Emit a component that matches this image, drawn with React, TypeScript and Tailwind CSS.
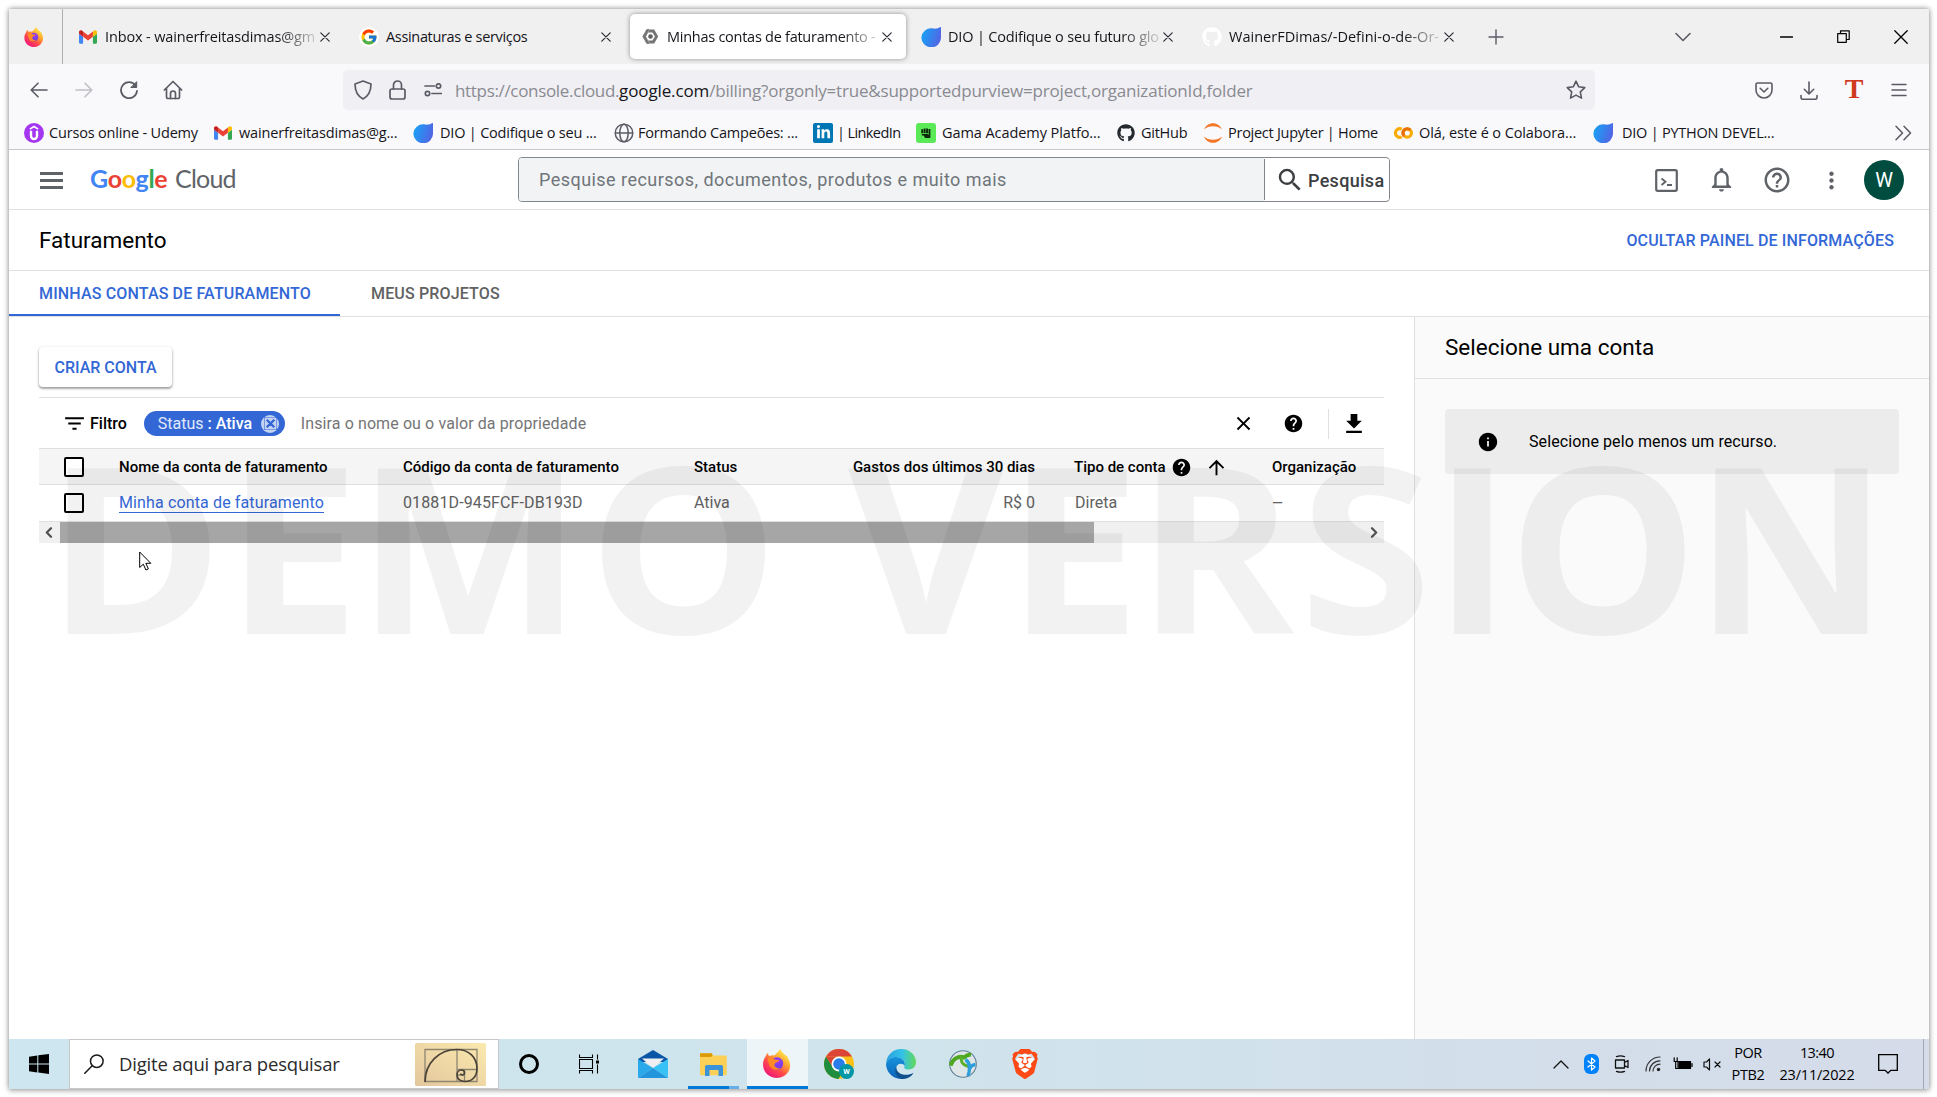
import type { ReactNode } from "react";
import { FcGoogle } from "react-icons/fc";
import { FaGithub, FaLinkedinIn } from "react-icons/fa";
import {
  MdArrowUpward,
  MdClose,
  MdHelp,
  MdHelpOutline,
  MdInfo,
  MdNotificationsNone,
  MdMoreVert,
  MdSearch,
  MdFilterList,
} from "react-icons/md";
import { SiBrave } from "react-icons/si";

/* ---------- logos ---------- */

function Firefox({ id, className }: { id: string; className: string }) {
  return (
    <svg viewBox="0 0 28 29" className={className}>
      <defs>
        <linearGradient id={`${id}-body`} x1="0.85" y1="0.05" x2="0.2" y2="0.95">
          <stop offset="0" stopColor="#fff44f" />
          <stop offset="0.35" stopColor="#ffa930" />
          <stop offset="0.65" stopColor="#ff4a4a" />
          <stop offset="1" stopColor="#f0147f" />
        </linearGradient>
        <radialGradient id={`${id}-globe`} cx="0.6" cy="0.3" r="0.8">
          <stop offset="0" stopColor="#a03df0" />
          <stop offset="1" stopColor="#5a3ee0" />
        </radialGradient>
      </defs>
      <path
        d="M2.6 7.6C3 6 4 4.6 5 4c0 1.300.4 2.300 1 3 2-.6 4-.8 5.500-.5C13 5 14.500 3.500 17.500 0c.8 2 1.500 3.500 3.500 5 2.500 1.500 3.800 3 4.200 4.500 2.700 5 2.500 9.500.3 13A13.600 13.600 0 0 1 14 29C6.500 29 0 23.300 0 15.500c0-3 1-5.600 2.600-7.900z"
        fill={`url(#${id}-body)`}
      />
      <circle cx="14" cy="14.500" r="6.200" fill={`url(#${id}-globe)`} />
      <path
        d="M5 9.500c3.200-1 5.500-.4 7.300 1.300 1.500.2 2.700.2 4 .2-.3 1.700-2.300 2-3.800 2.700-.3.700-.3 1.300-1.300 2 .5 2.800 3.500 4 6.300 3.200-3.500 3.100-9.500 2-11-2.400C5.600 14 4.800 12 5 9.500z"
        fill="#ff8a25"
      />
    </svg>
  );
}

function Gmail() {
  return (
    <svg viewBox="52 42 88 66" className="h-[14px] w-[18px]">
      <path fill="#4285f4" d="M58 108h14V74L52 59v43c0 3.320 2.690 6 6 6" />
      <path fill="#34a853" d="M120 108h14c3.320 0 6-2.690 6-6V59l-20 15" />
      <path fill="#fbbc04" d="M120 48v26l20-15v-8c0-7.420-8.470-11.650-14.400-7.200" />
      <path fill="#ea4335" d="M72 74V48l24 18 24-18v26L96 92" />
      <path fill="#c5221f" d="M52 51v8l20 15V48l-5.600-4.200c-5.940-4.450-14.400-.22-14.400 7.200" />
    </svg>
  );
}

function Dio({ id }: { id: string }) {
  return (
    <svg viewBox="0 0 20 20" className="size-5">
      <defs>
        <linearGradient id={id} x1="0" y1="0.3" x2="1" y2="0.6">
          <stop offset="0" stopColor="#17a2f5" />
          <stop offset="1" stopColor="#5463e4" />
        </linearGradient>
      </defs>
      <path d="M20 0v10.500a9.800 9.500 0 1 1-9-9.200c1.500.3 3 .5 4.500.2C17.500 1.200 18.500.3 20 0z" fill={`url(#${id})`} />
    </svg>
  );
}

function Udemy() {
  return (
    <svg viewBox="0 0 20 20" className="size-5">
      <circle cx="10" cy="10" r="10" fill="#a435f0" />
      <path d="M5.800 6.200 10 3.500l4.200 2.700" stroke="#fff" strokeWidth="1.600" fill="none" />
      <path d="M7 7.800v5.300a3 3 0 0 0 6 0V7.800" stroke="#fff" strokeWidth="2.400" fill="none" />
    </svg>
  );
}

function CloudHex() {
  return (
    <svg viewBox="0 0 17 17" className="size-[17px]">
      <path d="M4.800 1.500h2.400L3.600 8.500l3.600 7H4.800L.8 8.500z" fill="#757575" stroke="#757575" strokeWidth=".8" />
      <path d="M12.200 1.500H7.800L6 4.500h4.400l2.600 4-2.600 4H6l1.800 3h4.400l4-7z" fill="#757575" />
      <circle cx="8.500" cy="8.500" r="2.300" fill="#616161" />
    </svg>
  );
}

function Globe() {
  return (
    <svg viewBox="0 0 20 20" className="size-5" fill="none" stroke="#5b5b66" strokeWidth="1.500">
      <circle cx="10" cy="10" r="8.800" />
      <ellipse cx="10" cy="10" rx="4.200" ry="8.800" />
      <path d="M1.200 10h17.600" />
    </svg>
  );
}

function LinkedIn() {
  return (
    <span className="flex size-5 items-center justify-center rounded-[2px] bg-[#0077b5]">
      <FaLinkedinIn className="size-[15px] text-white" />
    </span>
  );
}

function Gama() {
  return (
    <svg viewBox="0 0 20 20" className="size-5">
      <rect width="20" height="20" rx="3" fill="#5bea57" />
      <path
        d="M5.300 6.300h1.900v4H5.300zM7.700 5.400h1.900v4.900H7.700zM10.100 5.400H12v4.900h-1.900zM12.500 6h1.900v6.500h-1.900zM5.800 10.900h6.200v1.600l-1 2.200h3.400v-2.200H5.800z"
        fill="#0b2a0a"
      />
      <path d="M7.500 12h6.500v3H9z" fill="#0b2a0a" />
    </svg>
  );
}

function Jupyter() {
  return (
    <svg viewBox="0 0 20 20" className="size-5" fill="#f37726">
      <path d="M1 6.500C2.600 2.500 6 .2 10 .2s7.400 2.300 9 6.300C16.500 4.200 13.500 3.200 10 3.200S3.500 4.200 1 6.500z" />
      <path d="M1 13.500c1.600 4 5 6.300 9 6.300s7.400-2.300 9-6.300c-2.500 2.300-5.500 3.300-9 3.300s-6.500-1-9-3.300z" />
    </svg>
  );
}

function Colab() {
  return (
    <svg viewBox="0 0 20 14" className="h-[14px] w-5" fill="none" strokeWidth="3.200">
      <path d="M8.700 3.200A4.300 4.300 0 1 0 8.700 10.800" stroke="#f9ab00" />
      <circle cx="14.200" cy="7" r="4.200" stroke="#f9ab00" />
      <path d="M11.200 10A4.200 4.200 0 0 1 17.200 4" stroke="#e8710a" />
    </svg>
  );
}

/* ---------- browser toolbar glyphs ---------- */

function Line({
  d,
  w = 20,
  h = 20,
  sw = 1.6,
  color = "#5b5b66",
  children,
}: {
  d?: string;
  w?: number;
  h?: number;
  sw?: number;
  color?: string;
  children?: ReactNode;
}) {
  return (
    <svg
      width={w}
      height={h}
      viewBox={`0 0 ${w} ${h}`}
      fill="none"
      stroke={color}
      strokeWidth={sw}
      strokeLinecap="round"
      strokeLinejoin="round"
      className="shrink-0"
    >
      {d && <path d={d} />}
      {children}
    </svg>
  );
}

function Cell({ className, children }: { className: string; children: ReactNode }) {
  return <div className={`flex shrink-0 items-center justify-center ${className}`}>{children}</div>;
}

/* ---------- tab strip ---------- */

function Tab({
  icon,
  title,
  track,
  active = false,
  fade = true,
}: {
  icon: ReactNode;
  title: string;
  track: string;
  active?: boolean;
  fade?: boolean;
}) {
  return (
    <div
      className={`mr-[5px] flex h-[45px] w-[276px] shrink-0 items-center rounded-[5px] ${
        active ? "bg-white shadow-[0_0_5px_rgba(0,0,0,0.4)]" : ""
      }`}
    >
      <Cell className="ml-[9px] w-[22px]">{icon}</Cell>
      <div
        className={`ml-[6px] w-[211px] overflow-hidden whitespace-pre pt-px text-[14.5px] leading-6 text-[#15141a] ${track} ${
          fade ? "[mask-image:linear-gradient(to_right,black_82%,transparent_103%)]" : ""
        }`}
      >
        {title}
      </div>
      <Cell className="w-[17px]">
        <Line w={10} h={10} sw={1.2} color="#2b2a33" d="M.8.8l8.400 8.400M9.200.8L.8 9.200" />
      </Cell>
    </div>
  );
}

function TabStrip() {
  return (
    <div className="flex h-[55px] items-center bg-[#f0f0f0]">
      <Cell className="h-full w-[54px] border-r border-[#b0b0b0] pr-[4px]">
        <Firefox id="ff-tab" className="h-[20px] w-[20px]" />
      </Cell>
      <div className="flex w-[1409px] pl-[5px]">
        <Tab icon={<Gmail />} title="Inbox - wainerfreitasdimas@gm" track="tracking-[-0.14px]" />
        <Tab
          icon={
            <span className="flex size-5 items-center justify-center rounded-full bg-white">
              <FcGoogle className="size-[18px]" />
            </span>
          }
          title="Assinaturas e serviços"
          track="tracking-[-0.33px]"
          fade={false}
        />
        <Tab icon={<CloudHex />} title="Minhas contas de faturamento -" track="tracking-[-0.26px]" active />
        <Tab icon={<Dio id="dio-tab" />} title="DIO | Codifique o seu futuro glo" track="tracking-[-0.18px]" />
        <Tab
          icon={<FaGithub className="size-5 text-white" />}
          title="WainerFDimas/-Defini-o-de-Or-"
          track="tracking-[0.02px]"
        />
      </div>
      <Cell className="w-[47px]">
        <Line w={16} h={16} sw={1.4} d="M8 1v14M1 8h14" />
      </Cell>
      <div className="flex flex-1 items-center justify-end">
        <Cell className="mr-[65px] w-5">
          <Line w={16} h={10} sw={1.6} d="M1 1.500l7 7 7-7" />
        </Cell>
        <Cell className="w-[57px]">
          <Line w={13} h={2} sw={1.3} color="#000" d="M.5 1h12" />
        </Cell>
        <Cell className="w-[57px]">
          <Line w={13} h={13} sw={1.2} color="#000" d="M.7 3.700h8.600v8.600H.7zM3.500 3.500V.8h8.700v8.700H9.500" />
        </Cell>
        <Cell className="w-[57px]">
          <Line w={14} h={14} sw={1.3} color="#000" d="M.8.8l12.400 12.400M13.200.8L.8 13.200" />
        </Cell>
      </div>
    </div>
  );
}

function NavBar() {
  return (
    <div className="flex h-[52px] items-center bg-[#f9f9fb]">
      <Cell className="ml-[8px] w-[44px]">
        <Line w={18} h={16} d="M17 8H1.500M8 1.200L1.200 8 8 14.800" />
      </Cell>
      <Cell className="w-[45px]">
        <Line w={18} h={16} color="#bfbfc6" d="M1 8h15.500M10 1.200L16.800 8 10 14.800" />
      </Cell>
      <Cell className="w-[45px]">
        <Line w={18} h={18} sw={1.800}>
          <path d="M15.500 4.500A8 8 0 1 0 17 10" />
          <path d="M16.700 1v5.500h-5.500z" fill="#5b5b66" strokeWidth={1} />
        </Line>
      </Cell>
      <Cell className="w-[44px]">
        <Line w={20} h={20} sw={1.700}>
          <path d="M1.300 10L10 1.500 18.700 10M3.500 8.500v8.300c0 1 .7 1.700 1.700 1.700h9.600c1 0 1.700-.7 1.700-1.700V8.500" />
          <path d="M7.500 18.500v-5a2.500 2.500 0 0 1 5 0v5" />
        </Line>
      </Cell>
      <div className="ml-[148px] flex h-10 w-[1252px] items-center rounded-[5px] bg-[#f0f0f4]">
        <Cell className="ml-[3px] w-[34px]">
          <Line w={18} h={20} sw={1.700} d="M9 1L17 4c0 7-2.500 12-8 15C3.500 16 1 11 1 4z" />
        </Cell>
        <Cell className="w-[35px]">
          <Line w={17} h={20} sw={1.700}>
            <rect x="1" y="9" width="15" height="10" rx="2" />
            <path d="M4.500 9V5a4 4 0 0 1 8 0v4" />
          </Line>
        </Cell>
        <Cell className="w-[35px]">
          <Line w={18} h={14} sw={1.700}>
            <path d="M1 3h9.500M8 10.500h9.500" />
            <circle cx="14.500" cy="3" r="2.200" />
            <circle cx="3.500" cy="10.500" r="2.200" />
          </Line>
        </Cell>
        <div className="ml-[5px] flex-1 whitespace-pre pt-[1px] text-[17px] leading-6 text-[#8a8a91]">
          <span className="tracking-[-0.33px]">https://console.cloud.</span>
          <span className="tracking-[-0.13px] text-[#15141a]">google.com</span>
          <span className="tracking-[-0.2px]">
            /billing?orgonly=true&amp;supportedpurview=project,organizationId,folder
          </span>
        </div>
        <Cell className="w-[38px]">
          <Line
            w={20}
            h={20}
            sw={1.600}
            d="M10 1.200l2.700 5.600 6.100.8-4.500 4.300 1.200 6.200-5.500-3-5.500 3 1.200-6.200L1.200 7.600l6.100-.8z"
          />
        </Cell>
      </div>
      <Cell className="ml-[146px] w-[45px]">
        <Line w={18} h={17} sw={1.600} d="M2.500 1h13c.8 0 1.500.7 1.500 1.500V8a8 8 0 0 1-16 0V2.500C1 1.700 1.700 1 2.500 1zM5.200 6.300L9 10l3.800-3.700" />
      </Cell>
      <Cell className="w-[45px]">
        <Line w={18} h={19} sw={1.600} d="M9 1v11.500M4.300 8.300L9 13l4.700-4.700M1 14.500v1.700c0 1.200.8 2 2 2h12c1.200 0 2-.8 2-2v-1.700" />
      </Cell>
      <Cell className="w-[46px]">
        <span className="-mt-[2px] font-['Liberation_Serif'] text-[28px] font-bold leading-5 text-[#d0391f]">T</span>
      </Cell>
      <Cell className="w-[44px]">
        <Line w={16} h={14} sw={1.500} d="M1 1.500h14M1 7h14M1 12.500h14" />
      </Cell>
    </div>
  );
}

function Bookmark({ w, gap, track, icon, label }: { w: string; gap: string; track: string; icon: ReactNode; label: string }) {
  return (
    <div className={`flex shrink-0 items-center ${w} ${gap}`}>
      <Cell className="w-5">{icon}</Cell>
      <span className={`whitespace-pre text-[14.5px] leading-6 text-[#15141a] ${track}`}>{label}</span>
    </div>
  );
}

function BookmarksBar() {
  return (
    <div className="flex h-[34px] items-center border-b border-[#c8c8cb] bg-[#f9f9fb] pl-[15px]">
      <Bookmark w="w-[189px]" gap="gap-[5px]" track="tracking-[-0.18px]" icon={<Udemy />} label="Cursos online - Udemy" />
      <Bookmark w="w-[200px]" gap="gap-[6px]" track="tracking-[-0.15px]" icon={<Gmail />} label="wainerfreitasdimas@g..." />
      <Bookmark w="w-[201px]" gap="gap-[7px]" track="tracking-[-0.2px]" icon={<Dio id="dio-b1" />} label="DIO | Codifique o seu ..." />
      <Bookmark w="w-[199px]" gap="gap-[4px]" track="tracking-[-0.2px]" icon={<Globe />} label="Formando Campeões: ..." />
      <Bookmark w="w-[103px]" gap="gap-[4px]" track="tracking-[-0.6px]" icon={<LinkedIn />} label="| LinkedIn" />
      <Bookmark w="w-[200px]" gap="gap-[6px]" track="tracking-[-0.07px]" icon={<Gama />} label="Gama Academy Platfo..." />
      <Bookmark w="w-[87px]" gap="gap-[5px]" track="tracking-[-0.25px]" icon={<FaGithub className="size-[18px] text-[#24292e]" />} label="GitHub" />
      <Bookmark w="w-[190px]" gap="gap-[5px]" track="tracking-[-0.26px]" icon={<Jupyter />} label="Project Jupyter | Home" />
      <Bookmark w="w-[200px]" gap="gap-[6px]" track="tracking-[-0.1px]" icon={<Colab />} label="Olá, este é o Colabora..." />
      <Bookmark w="w-[200px]" gap="gap-[9px]" track="tracking-[-0.23px]" icon={<Dio id="dio-b2" />} label="DIO | PYTHON DEVEL..." />
      <div className="flex flex-1 justify-end pr-[17px]">
        <Line w={17} h={16} sw={1.500} d="M1 1.200L7.500 8 1 14.800M9 1.200L15.500 8 9 14.800" />
      </div>
    </div>
  );
}

/* ---------- Google Cloud console ---------- */

function ConsoleHeader() {
  return (
    <div className="flex h-[60px] items-center border-b border-[#e0e0e0] bg-white">
      <div className="ml-[31px] mt-px flex w-[23px] flex-col gap-[4px]">
        <span className="h-[3px] bg-[#5f6368]" />
        <span className="h-[3px] bg-[#5f6368]" />
        <span className="h-[3px] bg-[#5f6368]" />
      </div>
      <div className="-mt-[3px] ml-[27px] flex w-[428px] items-baseline whitespace-pre font-['Lato'] text-[25px] leading-8">
        <span className="w-[85px] font-bold tracking-[-0.35px]">
          <span className="text-[#4285f4]">G</span>
          <span className="text-[#ea4335]">o</span>
          <span className="text-[#fbbc04]">o</span>
          <span className="text-[#4285f4]">g</span>
          <span className="text-[#34a853]">l</span>
          <span className="text-[#ea4335]">e</span>
        </span>
        <span className="tracking-[-0.8px] text-[#5f6368]">Cloud</span>
      </div>
      <div className="flex h-[45px] w-[872px] overflow-hidden rounded-[4px] border border-[#80868b]">
        <div className="flex w-[745px] items-center bg-[#f1f3f4] pl-[20px] text-[18px] tracking-[0.46px] text-[#70757a]">
          Pesquise recursos, documentos, produtos e muito mais
        </div>
        <div className="my-px flex flex-1 items-center border-l border-[#80868b] bg-white pl-[10px] pt-px text-[18px] font-medium tracking-[0.3px] text-[#3c4043]">
          <MdSearch className="mr-[3px] size-[30px]" />
          Pesquisa
        </div>
      </div>
      <div className="ml-auto flex items-center pr-[25px] text-[#5f6368]">
        <Cell className="w-[56px] pt-[2px]">
          <svg viewBox="0 0 23 23" className="size-[23px]" fill="none" stroke="#5f6368">
            <rect x="1.200" y="1.200" width="20.600" height="20.600" rx="1.500" strokeWidth="2.200" />
            <path d="M6.500 9.500l4 3.300-4 3.300M12 16h5" strokeWidth="1.900" />
          </svg>
        </Cell>
        <Cell className="w-[55px]">
          <MdNotificationsNone className="size-[29px]" />
        </Cell>
        <Cell className="w-[55px]">
          <MdHelpOutline className="size-[30px]" />
        </Cell>
        <Cell className="w-[54px] pt-px">
          <MdMoreVert className="size-[27px]" />
        </Cell>
        <Cell className="ml-[6px] size-10 rounded-full bg-[#004d40] pt-px text-[20px] text-white">W</Cell>
      </div>
    </div>
  );
}

const GRID = "grid grid-cols-[80px_284px_291px_141px_200px_237px_112px] items-center";

function Checkbox() {
  return <span className="ml-[25px] block size-[20px] rounded-[2px] border-2 border-black bg-white" />;
}

function BillingTable() {
  return (
    <div className="mt-[10px] w-[1345px] border-t border-[#e0e0e0]">
      <div className="flex h-[50px] items-center pt-px">
        <MdFilterList className="ml-[23px] size-[25px] text-black" />
        <span className="ml-[3px] text-[16px] font-medium text-black">Filtro</span>
        <div className="ml-[17px] flex h-[25px] w-[141px] items-center whitespace-pre rounded-full bg-[#3367d6] pl-[14px] text-[16px] text-white">
          <span className="text-[#e1e9f9]">Status</span>
          <span className="font-medium"> : Ativa</span>
          <span className="ml-[9px] flex size-[18px] items-center justify-center rounded-full bg-[#c5d3f3]">
            <MdClose className="size-[13px] stroke-[#3367d6] stroke-2 text-[#3367d6]" />
          </span>
        </div>
        <span className="ml-[16px] text-[16px] tracking-[0.1px] text-[#757575]">Insira o nome ou o valor da propriedade</span>
        <div className="ml-auto flex items-center pr-[17px] text-black">
          <Cell className="w-[50px]">
            <MdClose className="size-[23px]" />
          </Cell>
          <Cell className="mr-[10px] w-[50px]">
            <MdHelp className="size-[21px]" />
          </Cell>
          <div className="h-[30px] w-px bg-[#e0e0e0]" />
          <Cell className="ml-[12px] w-[26px]">
            <svg viewBox="5 3 14 17" className="h-[19px] w-[16px]" fill="#000">
              <path d="M19 9h-4V3H9v6H5l7 7 7-7zM5 18v2h14v-2H5z" />
            </svg>
          </Cell>
        </div>
      </div>
      <div className={`${GRID} h-[37px] border-y border-[#e0e0e0] bg-[#f5f5f5] pt-px text-[15px] font-medium text-black`}>
        <Checkbox />
        <span>Nome da conta de faturamento</span>
        <span>Código da conta de faturamento</span>
        <span>Status</span>
        <span className="text-right">Gastos dos últimos 30 dias</span>
        <span className="flex items-center pl-[39px]">
          Tipo de conta
          <MdHelp className="ml-[5px] size-[21px]" />
          <MdArrowUpward className="ml-[13px] size-[23px]" />
        </span>
        <span>Organização</span>
      </div>
      <div className={`${GRID} h-[37px] border-b border-[#e0e0e0] text-[16px] text-[#616161]`}>
        <Checkbox />
        <a className="flex h-[20px] w-fit items-center border-b border-[#3367d6] tracking-[0.13px] text-[#3367d6]">
          Minha conta de faturamento
        </a>
        <span className="tracking-[0.12px]">01881D-945FCF-DB193D</span>
        <span>Ativa</span>
        <span className="text-right">R$ 0</span>
        <span className="pl-[40px]">Direta</span>
        <span className="text-[14px]">—</span>
      </div>
      <div className="flex h-[21px] items-center bg-[#f0f0f0]">
        <Cell className="w-[21px] pr-[2px]">
          <Line w={8} h={11} sw={2.200} color="#505050" d="M6 1.200L1.800 5.500 6 9.800" />
        </Cell>
        <div className="h-full w-[1034px] bg-[#a6a6a6]" />
        <div className="flex flex-1 justify-end pr-[6px]">
          <Line w={8} h={11} sw={2.200} color="#505050" d="M2 1.200l4.200 4.300L2 9.800" />
        </div>
      </div>
    </div>
  );
}

function Console() {
  return (
    <div className="flex flex-1 flex-col bg-white font-['Roboto']">
      <ConsoleHeader />
      <div className="flex h-[61px] items-center justify-between border-b border-[#e0e0e0] pl-[30px] pr-[35px] pt-[2px]">
        <h1 className="text-[22.500px] text-black">Faturamento</h1>
        <span className="text-[16px] font-medium tracking-[0.14px] text-[#3367d6]">OCULTAR PAINEL DE INFORMAÇÕES</span>
      </div>
      <div className="flex h-[46px] border-b border-[#e0e0e0] text-[16px] font-medium tracking-[0.15px] text-[#616161]">
        <div className="flex h-[45px] w-[331px] items-center border-b-2 border-[#3367d6] pl-[30px] pt-[2px] text-[#3367d6]">
          MINHAS CONTAS DE FATURAMENTO
        </div>
        <div className="flex h-[43px] items-center pl-[31px] pt-[2px]">MEUS PROJETOS</div>
      </div>
      <div className="flex flex-1">
        <div className="w-[1405px] pl-[30px] pt-[30px]">
          <div className="flex h-10 w-[133px] items-center justify-center rounded-[4px] bg-white pt-[2px] text-[16px] font-medium text-[#3367d6] shadow-[0_1px_3px_rgba(0,0,0,0.3),0_2px_2px_rgba(0,0,0,0.2)]">
            CRIAR CONTA
          </div>
          <BillingTable />
        </div>
        <div className="flex-1 border-l border-[#e0e0e0] bg-[#fafafa]">
          <div className="flex h-[62px] items-center border-b border-[#e0e0e0] pl-[30px] text-[22.500px] text-black">
            Selecione uma conta
          </div>
          <div className="ml-[30px] mt-[30px] flex h-[65px] w-[454px] items-center rounded-[4px] bg-[#ececec] text-[16px] tracking-[0.1px] text-black">
            <MdInfo className="ml-[32px] mr-[30px] size-[22px]" />
            Selecione pelo menos um recurso.
          </div>
        </div>
      </div>
    </div>
  );
}

/* ---------- Windows taskbar ---------- */

function GoldenSpiral() {
  return (
    <svg viewBox="0 0 71 43" className="h-[43px] w-[71px]" fill="none">
      <defs>
        <linearGradient id="gold" x1="1" y1="0" x2="0" y2="1">
          <stop offset="0" stopColor="#fbe9ae" />
          <stop offset="1" stopColor="#e3c79d" />
        </linearGradient>
      </defs>
      <rect width="71" height="43" rx="1.500" fill="url(#gold)" />
      <path d="M10 6.500h52v32H10zM42 6.500v32M42 26.500h20M49.500 26.500v12M42 32h7.500" stroke="#8f8672" strokeWidth="1.300" />
      <path
        d="M10 39C10 20 24 6.500 42 6.500c12 0 20 8 20 19 0 8-5 13-12 13-5 0-8-3-8-6.500 0-3 2-5 4.500-5 2 0 3 1.300 3 2.800 0 1.400-1 2.200-2.200 2.200-1 0-1.600-.6-1.600-1.500"
        stroke="#4b4238"
        strokeWidth="1.700"
      />
    </svg>
  );
}

function Chrome() {
  return (
    <svg viewBox="0 0 30 30" className="size-[30px]">
      <circle cx="15" cy="15" r="15" fill="#fbc116" />
      <path d="M2 7.500A15 15 0 0 1 28 7.500H15z" fill="#db4437" />
      <path d="M2 7.500A15 15 0 0 0 14.500 30l6-11L9 18z" fill="#1e8e3e" />
      <path d="M2 7.500L9 18.500 15 7.500z" fill="#db4437" />
      <circle cx="15" cy="15" r="7.500" fill="#fff" />
      <circle cx="15" cy="15" r="5.800" fill="#2a7de9" />
      <circle cx="22.500" cy="22.500" r="7.500" fill="#0097a7" />
      <text x="22.500" y="25.200" fontSize="7.500" fill="#fff" textAnchor="middle" fontFamily="Roboto" fontWeight="700">
        W
      </text>
    </svg>
  );
}

function Edge() {
  return (
    <svg viewBox="0 0 30 30" className="size-[30px]">
      <defs>
        <linearGradient id="edge-top" x1="0" y1="0.4" x2="1" y2="0.4">
          <stop offset="0" stopColor="#2a9fe0" />
          <stop offset="0.55" stopColor="#33c3e8" />
          <stop offset="1" stopColor="#62d957" />
        </linearGradient>
        <linearGradient id="edge-left" x1="0" y1="0" x2="0" y2="1">
          <stop offset="0" stopColor="#1793dc" />
          <stop offset="1" stopColor="#0b62b8" />
        </linearGradient>
      </defs>
      <path d="M0 15C.5 6 7 0 15.500 0 24 0 30 6.500 30 13c0 4.500-3 7.500-7.500 7.500-3 0-5-1-4-3.200 2-5.300-3-9.300-8.500-9.300C5 8 1.500 11 0 15z" fill="url(#edge-top)" />
      <path d="M0 15C1.500 10.500 5.500 8 10 8c5.500 0 10 4 8.500 9-1-3-7.500-3.500-8.500 2-.8 5 3 10.500 8.500 10.500A15 15 0 0 1 0 15z" fill="url(#edge-left)" />
      <path d="M10.500 17c-1 5 3.500 8.800 9.500 8.800 3 0 5-.6 7.500-2C25.500 28 20.500 30.500 15.500 30 9.500 28.500 8 21.500 10.500 17z" fill="#10508f" />
    </svg>
  );
}

function Taskbar() {
  return (
    <div className="flex h-[50px] items-center bg-[linear-gradient(90deg,#cde6ef_0%,#cfe4ec_45%,#d5dbe9_100%)] text-black">
      <Cell className="w-[60px]">
        <svg viewBox="0 0 20 20" className="size-5">
          <path d="M0 2.700L8.300 1.500v8H0zM9.300 1.300L20 0v9.500H9.300zM0 10.500h8.300v8L0 17.300zM9.300 10.500H20V20L9.300 18.600z" />
        </svg>
      </Cell>
      <div className="flex h-full w-[430px] items-center border border-[#c8c8c8] bg-white">
        <div className="ml-[14px]">
          <Line w={20} h={20} sw={1.500} color="#1a1a1a">
            <circle cx="12.800" cy="7.200" r="6.300" />
            <path d="M8.200 11.800L.8 19.200" />
          </Line>
        </div>
        <span className="ml-[15px] text-[18.500px] tracking-[-0.2px] text-[#2b2b2b]">Digite aqui para pesquisar</span>
        <div className="ml-auto mr-[12px]">
          <GoldenSpiral />
        </div>
      </div>
      <Cell className="w-[60px]">
        <span className="size-[20px] rounded-full border-[3px] border-black" />
      </Cell>
      <Cell className="w-[60px]">
        <svg viewBox="0 0 20 20" className="size-5" fill="none" stroke="#000" strokeWidth="1.100">
          <path d="M.5.5v3h13v-3M.5 5.500h13v9H.5zM.5 19.500v-3h13v3M18.500.5v5M18.500 10.500v9" />
          <path d="M17 6.500h3v3h-3z" fill="#000" stroke="none" />
        </svg>
      </Cell>
      <Cell className="w-[68px]">
        <svg viewBox="0 0 30 28" className="h-7 w-[30px]">
          <path d="M0 9L15 0l15 9v3H0z" fill="#0a55a5" />
          <path d="M4 8.500h22L15 18z" fill="#f1eff2" />
          <path d="M0 9l15 9L0 28z" fill="#29a8ea" />
          <path d="M30 9v19L15 18z" fill="#38c1f5" />
          <path d="M15 18L30 28H0z" fill="#2196dc" />
        </svg>
      </Cell>
      <div className="flex h-full w-[53px] flex-col items-center">
        <div className="flex flex-1 items-center pt-[3px]">
          <svg viewBox="0 0 27 23" className="h-[23px] w-[27px]">
            <path d="M0 1.500C0 .7.600.200 1.300.200H11l2.500 2.300h12c.7 0 1.300.5 1.300 1.200V21c0 .7-.6 1.200-1.300 1.200h-24C.6 22.200 0 21.700 0 21z" fill="#fccf57" />
            <path d="M0 1.500C0 .7.600.200 1.300.200H11.500l1.200 1.900-1.500 2H0z" fill="#dd9a06" />
            <path d="M5 23v-9c0-1.200.8-2 2-2h14c1.200 0 2 .8 2 2v9h-4.500v-6h-9v6z" fill="#3d93d9" />
          </svg>
        </div>
        <div className="-ml-[1px] flex h-[3px] w-[51px]">
          <div className="w-[41px] bg-[#0078d7]" />
          <div className="w-[10px] bg-[#65aee8]" />
        </div>
      </div>
      <div className="ml-[7px] flex h-full w-[61px] flex-col bg-[#edf5f9]">
        <Cell className="flex-1 pr-px pt-[2px]">
          <Firefox id="ff-task" className="h-[29px] w-[28px]" />
        </Cell>
        <div className="h-[3px] bg-[#0078d7]" />
      </div>
      <Cell className="w-[62px]">
        <Chrome />
      </Cell>
      <Cell className="w-[62px]">
        <Edge />
      </Cell>
      <Cell className="w-[62px]">
        <svg viewBox="0 0 28 28" className="size-7">
          <circle cx="14" cy="14" r="13.300" fill="#dfe6e8" stroke="#5f7f95" strokeWidth="1.100" />
          <path d="M1.500 15.500c2.500-7 8-10 13.500-8 3-2.500 5-3 7-2.500" stroke="#4da81f" strokeWidth="4" fill="none" />
          <path d="M13 6.500c-2 5 1 8.500 5 9.500 2 .5 3 0 4-.5" stroke="#5ab02b" strokeWidth="3" fill="none" />
          <path d="M16.500 9.500c4.500 3 5 9 2.500 16.500M26.500 14.500c-4 .5-5.500 2.500-6 5" stroke="#2e9fdb" strokeWidth="3.400" fill="none" />
        </svg>
      </Cell>
      <Cell className="w-[62px]">
        <span className="flex items-center justify-center bg-[radial-gradient(circle,white_45%,transparent_46%)]">
          <SiBrave className="size-[30px] text-[#fb4a16]" />
        </span>
      </Cell>

      <div className="ml-auto flex h-full items-center">
        <Cell className="w-[30px]">
          <Line w={16} h={9} sw={1.300} color="#111" d="M1 8l7-7 7 7" />
        </Cell>
        <Cell className="w-[30px]">
          <span className="flex h-5 w-[15px] items-center justify-center rounded-[6px] bg-[#0082fc]">
            <Line w={9} h={14} sw={1.200} color="#fff" d="M1 4l7 6-3.500 3V1L8 4l-7 6" />
          </span>
        </Cell>
        <Cell className="w-[32px]">
          <Line w={16} h={18} sw={1.300} color="#111" d="M1.500 5h9v8h-9zM10.500 7.500L14 5.500v7l-3.500-2M2.500 1.600C5 .6 8 .6 10.500 1.600M2.500 16.400c2.500 1 5.500 1 8 0" />
        </Cell>
        <Cell className="w-[30px]">
          <Line w={16} h={16} sw={1.200} color="#333">
            <path d="M1 15A14 14 0 0 1 15 1M4.500 15A10.500 10.500 0 0 1 15 4.800M8 15a7 7 0 0 1 7-6.800" />
            <circle cx="13.500" cy="13.500" r="1.200" fill="#000" />
          </Line>
        </Cell>
        <Cell className="w-[29px]">
          <Line w={20} h={14} sw={1.200} color="#000">
            <path d="M5 4.500h12.500v7H5zM19 6.500v3M1.200 1.500v3h3v-3M2.700 4.500v7H5M1.200.8v1M4.200.8v1" />
            <path d="M6 5.500h10.500v5H6z" fill="#000" />
          </Line>
        </Cell>
        <Cell className="w-[30px]">
          <Line w={19} h={13} sw={1.200} color="#111" d="M1 4h2.500L6.500 1v11L3.500 9H1zM12 4l5 5M17 4l-5 5" />
        </Cell>
        <div className="ml-[3px] flex w-[36px] flex-col items-center text-[14.500px] leading-[22px]">
          <span className="tracking-[-0.5px]">POR</span>
          <span className="tracking-[-0.4px]">PTB2</span>
        </div>
        <div className="ml-[11px] flex w-[80px] flex-col items-center text-[14.500px] leading-[22px]">
          <span className="tracking-[-0.55px]">13:40</span>
          <span className="tracking-[-0.2px]">23/11/2022</span>
        </div>
        <Cell className="ml-[15px] w-[32px]">
          <svg width="20" height="20" viewBox="0 0 20 20" fill="none" stroke="#000" strokeWidth="1.300">
            <path d="M.7.700h18.600v15.600h-6.500L10 19l-2.800-2.700H.7z" />
          </svg>
        </Cell>
        <div className="ml-[19px] h-full w-[6px] border-l border-[#a0a7b5]" />
      </div>
    </div>
  );
}

function Watermark() {
  return (
    <svg className="pointer-events-none absolute left-0 top-0 h-[1097px] w-[1937px]" viewBox="0 0 1937 1097">
      <text
        transform="scale(1.035 1)"
        x="44.400 217.800 344.300 568.100 750 819.300 972.400 1097.600 1255.500 1384 1456.600 1636.500"
        y="634"
        fontFamily="Open Sans"
        fontWeight="700"
        fontSize="232"
        fill="#000"
        fillOpacity="0.05"
      >
        DEMO VERSION
      </text>
    </svg>
  );
}

function Pointer() {
  return (
    <svg className="absolute left-[139px] top-[551px] h-[20px] w-[13px]" viewBox="0 0 13 20">
      <path d="M.7 1v15.500l3.600-3.300 2.600 5.800 2.500-1.100-2.600-5.600h5z" fill="#fff" stroke="#000" strokeWidth="1" />
    </svg>
  );
}

export default function App() {
  return (
    <div className="relative h-[1097px] w-[1937px] overflow-hidden bg-white pl-[9px] pt-[9px] font-['Open_Sans']">
      <div className="flex h-[1080px] w-[1920px] flex-col shadow-[0_-1px_4px_rgba(0,0,0,0.2),0_2px_5px_rgba(0,0,0,0.2),0_0_7px_rgba(0,0,0,0.2)]">
        <TabStrip />
        <NavBar />
        <BookmarksBar />
        <Console />
        <Taskbar />
      </div>
      <Watermark />
      <Pointer />
    </div>
  );
}
